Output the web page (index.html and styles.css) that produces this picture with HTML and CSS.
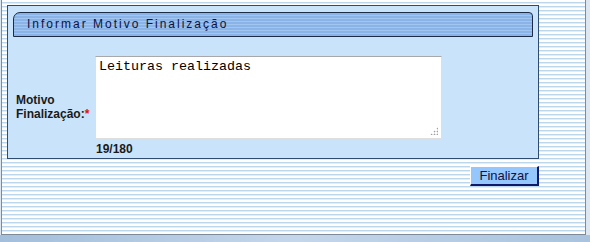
FILE: index.html
```html
<!DOCTYPE html>
<html lang="pt-BR">

<head>
    <meta charset="UTF-8">
    <meta name="viewport" content="width=device-width, initial-scale=1.0">
    <title>Informar Motivo Finalização</title>
    <link rel="stylesheet" href="styles.css">
</head>

<body>
    <div class="screen">
        <div class="page">
            <div class="panel">
                <div class="panel-title">Informar Motivo Finalização</div>

                <div class="form-row">
                    <label class="field-label" for="motivo">Motivo<br>Finalização:<span class="required">*</span></label>
                    <div class="field-box">
                        <textarea id="motivo" class="field-input" maxlength="180" autofocus>Leituras realizadas</textarea>
                        <span class="resize-grip"></span>
                    </div>
                    <span class="counter">19/180</span>
                </div>
            </div>

            <div class="actions">
                <button class="btn">Finalizar</button>
            </div>
        </div>
        <div class="side"></div>
    </div>
    <div class="desk"></div>
</body>

</html>
```

FILE: styles.css
```css
* {
    margin: 0;
    padding: 0;
    box-sizing: border-box;
}

body {
    width: 590px;
    height: 242px;
    overflow: hidden;
    font-family: "Liberation Sans", Arial, sans-serif;
    background: #a7c1dd;
    color: #1a1a1a;
}

.screen {
    display: flex;
    height: 235px;
    background: #dde7f1;
}

.page {
    width: 585px;
    height: 235px;
    margin-left: 1px;
    border-left: 1px solid #7d8b99;
    border-right: 1px solid #7d8b99;
    border-bottom: 1px solid #7d8b99;
    background: repeating-linear-gradient(to bottom,
            #ffffff 0, #ffffff 2px,
            #bcd6ec 2px, #bcd6ec 3px,
            #e2edf7 3px, #e2edf7 4px);
    padding-top: 5px;
}

.side {
    flex: 1;
}

.desk {
    height: 7px;
    background: linear-gradient(to right, #a3bedb, #c4d6ea 50%, #a9c3de);
}

/* painel */

.panel {
    width: 532px;
    height: 154px;
    margin-left: 5px;
    border: 1px solid #2f4c6e;
    background: #c9e3fb;
    padding: 6px 5px 0 5px;
}

.panel-title {
    height: 25px;
    border: 1px solid #1c2c44;
    border-radius: 7px 4px 0 0;
    background: repeating-linear-gradient(to bottom,
            #8ab4e8 0, #8ab4e8 2px,
            #a2c6f0 2px, #a2c6f0 3px);
    padding-left: 13px;
    font-size: 12px;
    line-height: 23px;
    letter-spacing: 2px;
    color: #0e1240;
}

.form-row {
    display: grid;
    grid-template-columns: 82px 347px;
    grid-template-rows: 83px 17px;
    margin-top: 19px;
}

.field-label {
    grid-row: 1 / span 2;
    align-self: center;
    padding: 1px 0 0 3px;
    font-size: 12px;
    font-weight: 700;
    line-height: 14px;
    color: #1a1a1a;
}

.required {
    color: #e01010;
}

.field-box {
    position: relative;
}

.field-input {
    display: block;
    width: 347px;
    height: 83px;
    border: 1px solid #dedede;
    border-top-color: #a8a8a8;
    padding: 2px 3px;
    font-family: "Liberation Mono", "Courier New", monospace;
    font-size: 13.33px;
    color: #000;
    background: #fff;
    resize: none;
    outline: none;
    caret-color: #000;
}

.resize-grip {
    position: absolute;
    right: 4px;
    bottom: 4px;
    width: 8px;
    height: 8px;
    background:
        radial-gradient(circle, #a0a0a0 0.8px, transparent 1.1px) 0 0 / 3px 3px;
    clip-path: polygon(100% 0, 100% 100%, 0 100%);
}

.counter {
    grid-column: 2;
    padding: 3px 0 0 1px;
    font-size: 12px;
    font-weight: 700;
    line-height: 14px;
}

/* acoes */

.actions {
    display: flex;
    justify-content: flex-end;
    width: 532px;
    margin: 7px 0 0 5px;
}

.btn {
    width: 69px;
    height: 20px;
    border: 1px solid #ffffff;
    border-right: 2px solid #10186a;
    border-bottom: 2px solid #10186a;
    background: #95c6fc;
    font-family: "Liberation Sans", Arial, sans-serif;
    font-size: 13px;
    line-height: 16px;
    color: #10103a;
    cursor: pointer;
}
```
